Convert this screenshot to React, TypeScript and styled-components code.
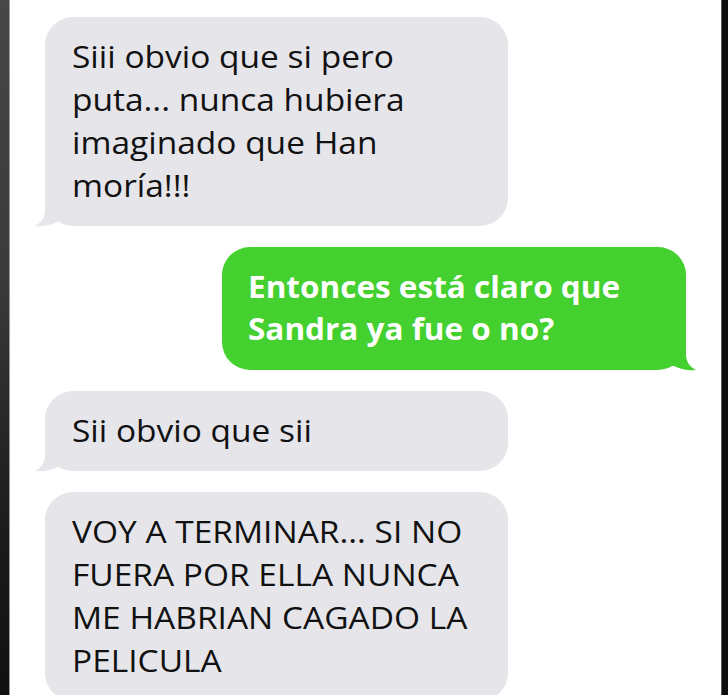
import React from "react";
import styled, { createGlobalStyle } from "styled-components";

const Global = createGlobalStyle`
  html, body { margin: 0; padding: 0; background: #ffffff; }
  body { font-family: "Open Sans", "Noto Sans", sans-serif; }
`;

const Frame = styled.div`
  width: 728px;
  height: 695px;
  display: flex;
  overflow: hidden;
  background: #ffffff;
`;

const LeftEdge = styled.div`
  width: 9px;
  flex: none;
  background: linear-gradient(180deg, #474747 0%, #3a3a3a 40%, #1c1c1c 75%, #111111 100%);
  border-right: 1px solid #9a9a9a;
`;

const RightEdge = styled.div`
  width: 6px;
  flex: none;
  background: #0d0d0d;
  border-left: 1px solid #5a5a5a;
`;

const Thread = styled.div`
  flex: 1;
  display: flex;
  flex-direction: column;
  gap: 21px;
  padding: 17px 35px 0 35px;
`;

const Bubble = styled.div<{ $out?: boolean }>`
  position: relative;
  box-sizing: border-box;
  width: ${(p) => (p.$out ? "464px" : "463px")};
  align-self: ${(p) => (p.$out ? "flex-end" : "flex-start")};
  padding: ${(p) => (p.$out ? "19px 20px 20px 26px" : "18px 20px 19px 27px")};
  border-radius: 28px;
  background: ${(p) => (p.$out ? "#44d02e" : "#e5e5ea")};
  color: ${(p) => (p.$out ? "#ffffff" : "#111111")};
  font-family: "Open Sans", "Noto Sans", sans-serif;
  font-weight: ${(p) => (p.$out ? 700 : 400)};
  font-size: ${(p) => (p.$out ? "30px" : "31px")};
  line-height: ${(p) => (p.$out ? "42px" : "43px")};
`;

const TailSvg = styled.svg<{ $out?: boolean }>`
  position: absolute;
  bottom: -2px;
  width: 30px;
  height: 32px;
  ${(p) => (p.$out ? "right: -10px; transform: scaleX(-1);" : "left: -10px;")}
`;

function Tail({ out }: { out?: boolean }) {
  return (
    <TailSvg $out={out} viewBox="0 0 30 32" aria-hidden>
      <path
        d="M10 0 L10 14 C10 22 6 27 0 30 C8 31 16 29 22 26 L30 26 L30 0 Z"
        fill={out ? "#44d02e" : "#e5e5ea"}
      />
    </TailSvg>
  );
}

type Msg = { out?: boolean; lines: string[]; tail?: boolean };

const messages: Msg[] = [
  {
    lines: ["Siii obvio que si pero", "puta... nunca hubiera", "imaginado que Han", "moría!!!"],
    tail: true,
  },
  { out: true, lines: ["Entonces está claro que", "Sandra ya fue o no?"], tail: true },
  { lines: ["Sii obvio que sii"], tail: true },
  {
    lines: ["VOY A TERMINAR... SI NO", "FUERA POR ELLA NUNCA", "ME HABRIAN CAGADO LA", "PELICULA"],
  },
];

const Line = styled.div<{ $out?: boolean }>`
  white-space: nowrap;
  transform-origin: left center;
  transform: scaleX(${(p) => (p.$out ? 1.05 : 1.08)});
`;

export default function App() {
  return (
    <>
      <Global />
      <Frame>
        <LeftEdge />
        <Thread>
          {messages.map((m, i) => (
            <Bubble key={i} $out={m.out}>
              {m.tail && <Tail out={m.out} />}
              {m.lines.map((l, j) => (
                <Line key={j} $out={m.out}>
                  {l}
                </Line>
              ))}
            </Bubble>
          ))}
        </Thread>
        <RightEdge />
      </Frame>
    </>
  );
}
